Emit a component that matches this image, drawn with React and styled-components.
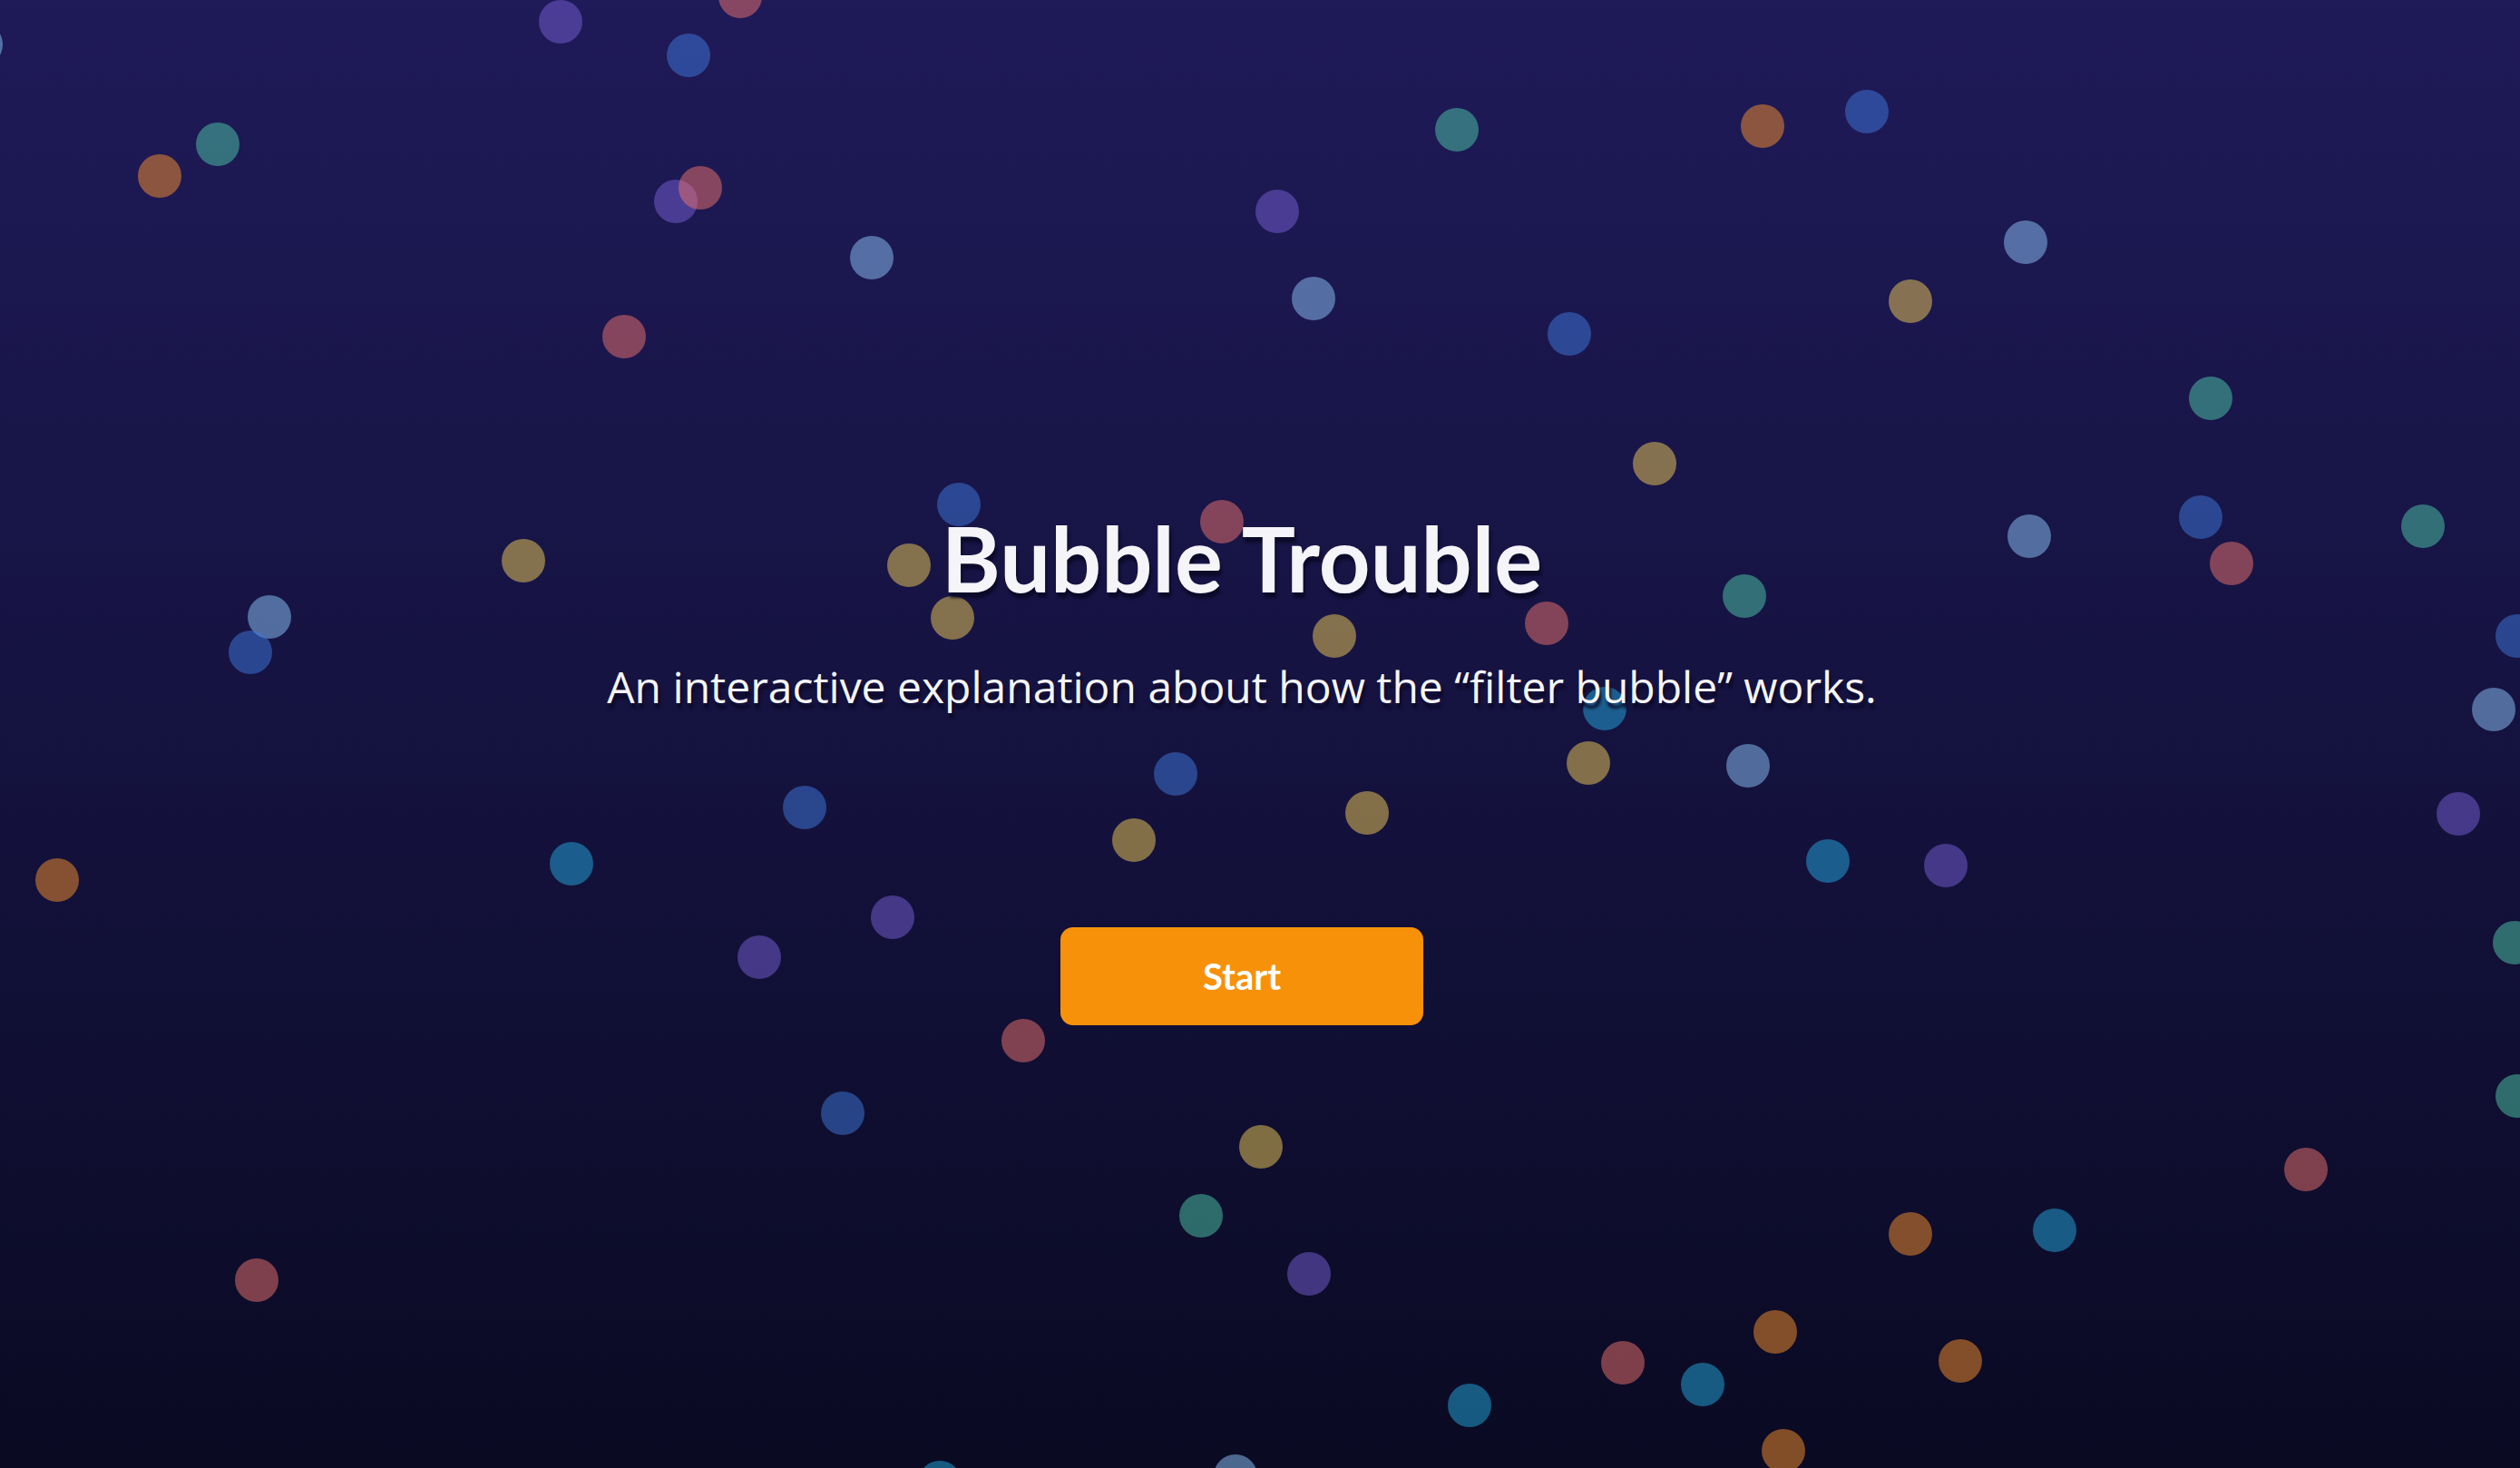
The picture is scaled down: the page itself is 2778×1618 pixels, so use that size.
import React from "react";
import styled, { createGlobalStyle } from "styled-components";

const GlobalStyle = createGlobalStyle`
  html, body {
    margin: 0;
    padding: 0;
    background: #0b0a24;
  }
  body {
    font-family: "Open Sans", "Noto Sans", sans-serif;
    overflow: hidden;
  }
`;

const SCALE = 2778 / 1568;
const SIZE = 48;

const COLORS = {
  purple: "rgb(119, 96, 213)",
  blue: "rgb(63, 122, 221)",
  steel: "rgb(141, 198, 249)",
  teal: "rgb(77, 202, 167)",
  orange: "rgb(250, 146, 43)",
  pink: "rgb(239, 116, 109)",
  olive: "rgb(242, 206, 86)",
  cyan: "rgb(36, 170, 221)",
};

const BUBBLES = [
  [-12.5, 27, "steel"],
  [348, 13, "purple"],
  [428, 34, "blue"],
  [460, -3, "pink"],
  [135, 89, "teal"],
  [99, 109, "orange"],
  [420, 125, "purple"],
  [435, 116, "pink"],
  [542, 160, "steel"],
  [388, 209, "pink"],
  [906, 80, "teal"],
  [794, 131, "purple"],
  [817, 185, "steel"],
  [1096, 78, "orange"],
  [1161, 69, "blue"],
  [1260, 150, "steel"],
  [1188, 187, "olive"],
  [976, 207, "blue"],
  [1375, 247, "teal"],
  [1029, 288, "olive"],
  [596, 313, "blue"],
  [760, 324, "pink"],
  [565, 351, "olive"],
  [592, 384, "olive"],
  [325, 348, "olive"],
  [167, 383, "steel"],
  [155, 405, "blue"],
  [1262, 333, "steel"],
  [1369, 321, "blue"],
  [1388, 350, "pink"],
  [1507, 327, "teal"],
  [1085, 370, "teal"],
  [962, 387, "pink"],
  [830, 395, "olive"],
  [1566, 395, "blue"],
  [998, 440, "cyan"],
  [1551, 441, "steel"],
  [988, 474, "olive"],
  [1087, 476, "steel"],
  [731, 481, "blue"],
  [500, 502, "blue"],
  [850, 505, "olive"],
  [705, 522, "olive"],
  [1529, 506, "purple"],
  [35, 547, "orange"],
  [355, 537, "cyan"],
  [1137, 535, "cyan"],
  [1210, 538, "purple"],
  [555, 570, "purple"],
  [472, 595, "purple"],
  [1564, 586, "teal"],
  [636, 647, "pink"],
  [524, 692, "blue"],
  [1566, 681, "teal"],
  [1434, 727, "pink"],
  [784, 713, "olive"],
  [747, 756, "teal"],
  [1278, 765, "cyan"],
  [1188, 767, "orange"],
  [814, 792, "purple"],
  [159, 796, "pink"],
  [1104, 828, "orange"],
  [1009, 847, "pink"],
  [1059, 861, "cyan"],
  [1219, 846, "orange"],
  [914, 874, "cyan"],
  [1109, 902, "orange"],
  [768, 918, "steel"],
  [584, 922, "cyan"],
];

const Page = styled.main`
  position: relative;
  min-height: 100vh;
  overflow: hidden;
  background: linear-gradient(180deg, #1f1a58 0%, #171445 40%, #0a0a23 100%);
`;

const BubbleField = styled.div`
  position: absolute;
  inset: 0;
  overflow: hidden;
  pointer-events: none;
`;

const Bubble = styled.span`
  position: absolute;
  width: ${SIZE}px;
  height: ${SIZE}px;
  border-radius: 50%;
  background: ${(p) => COLORS[p.$tone]};
  opacity: 0.5;
`;

const Hero = styled.section`
  position: relative;
  z-index: 1;
  display: flex;
  flex-direction: column;
  align-items: center;
  padding: 556px 40px 0 0;
`;

const Title = styled.h1`
  margin: 0;
  font-family: "Lato", "Open Sans", sans-serif;
  font-weight: 700;
  font-size: 99px;
  line-height: 1.2;
  letter-spacing: 0;
  color: #f5f4f8;
  text-shadow: 2px 6px 3px rgba(10, 8, 36, 0.85);
`;

const Subtitle = styled.p`
  margin: 48px 0 0;
  font-family: "Open Sans", "Noto Sans", sans-serif;
  font-weight: 400;
  font-size: 48px;
  line-height: 1.4;
  color: #f5f5f8;
  text-shadow: 2px 6px 3px rgba(10, 8, 36, 0.85);
`;

const StartButton = styled.button`
  margin-top: 232px;
  width: 400px;
  height: 108px;
  border: none;
  border-radius: 14px;
  background: #f8910a;
  color: #ffffff;
  font-family: "Lato", "Open Sans", sans-serif;
  font-weight: 700;
  font-size: 40px;
  cursor: pointer;
  display: flex;
  align-items: center;
  justify-content: center;
`;

export default function App() {
  return (
    <>
      <GlobalStyle />
      <Page>
        <BubbleField>
          {BUBBLES.map(([x, y, tone], i) => (
            <Bubble
              key={i}
              $tone={tone}
              style={{
                left: `${x * SCALE - SIZE / 2 + 1}px`,
                top: `${y * SCALE - SIZE / 2 + 1}px`,
              }}
            />
          ))}
        </BubbleField>
        <Hero>
          <Title>Bubble Trouble</Title>
          <Subtitle>An interactive explanation about how the “filter bubble” works.</Subtitle>
          <StartButton>Start</StartButton>
        </Hero>
      </Page>
    </>
  );
}
